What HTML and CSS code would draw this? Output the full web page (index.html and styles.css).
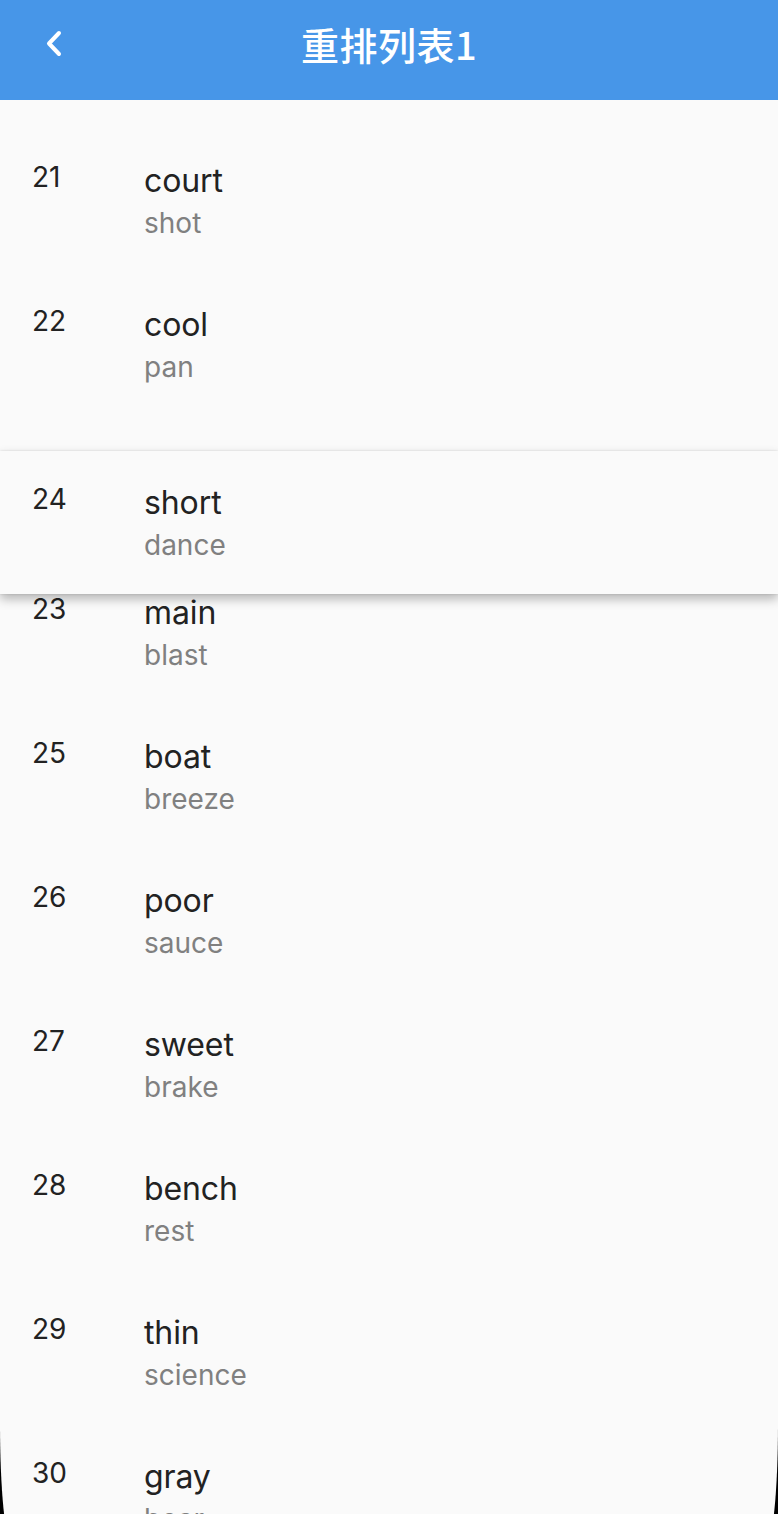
FILE: index.html
```html
<!DOCTYPE html>
<html lang="zh">
<head>
<meta charset="utf-8">
<title>重排列表1</title>
<link rel="stylesheet" href="styles.css">
</head>
<body>
<div class="screen">
  <header class="appbar">
    <div class="appbar-lead">
      <svg class="back" width="20" height="28" viewBox="0 0 20 28" aria-hidden="true">
        <polyline points="14,3 4,13.5 14,24" fill="none" stroke="#fff" stroke-width="4" stroke-linecap="round" stroke-linejoin="round"/>
      </svg>
    </div>
    <h1 class="appbar-title">重排列表1</h1>
    <div class="appbar-trail"></div>
  </header>

  <main class="list">
    <div class="row"><div class="tile"><span class="num">21</span><div class="texts"><div class="title">court</div><div class="sub">shot</div></div></div></div>
    <div class="row"><div class="tile"><span class="num">22</span><div class="texts"><div class="title">cool</div><div class="sub">pan</div></div></div></div>
    <div class="row row-gap"></div>
    <div class="row"><div class="tile"><span class="num">23</span><div class="texts"><div class="title">main</div><div class="sub">blast</div></div></div></div>
    <div class="row"><div class="tile"><span class="num">25</span><div class="texts"><div class="title">boat</div><div class="sub">breeze</div></div></div></div>
    <div class="row"><div class="tile"><span class="num">26</span><div class="texts"><div class="title">poor</div><div class="sub">sauce</div></div></div></div>
    <div class="row"><div class="tile"><span class="num">27</span><div class="texts"><div class="title">sweet</div><div class="sub">brake</div></div></div></div>
    <div class="row"><div class="tile"><span class="num">28</span><div class="texts"><div class="title">bench</div><div class="sub">rest</div></div></div></div>
    <div class="row"><div class="tile"><span class="num">29</span><div class="texts"><div class="title">thin</div><div class="sub">science</div></div></div></div>
    <div class="row"><div class="tile"><span class="num">30</span><div class="texts"><div class="title">gray</div><div class="sub">bear</div></div></div></div>
  </main>

  <div class="row dragging"><div class="tile"><span class="num">24</span><div class="texts"><div class="title">short</div><div class="sub">dance</div></div></div></div>

  <div class="bezel" aria-hidden="true"></div>
</div>
</body>
</html>
```

FILE: styles.css
```css
* { box-sizing: border-box; }

html, body {
  margin: 0;
  padding: 0;
  background: #fafafa;
}

body {
  font-family: Inter, Roboto, "Noto Sans CJK SC", sans-serif;
  color: #222222;
  overflow: hidden;
}

.screen {
  position: relative;
  width: 778px;
  height: 1514px;
  overflow: hidden;
  background: #fafafa;
}

.appbar {
  height: 100px;
  background: #4796e8;
  display: grid;
  grid-template-columns: 1fr auto 1fr;
  align-items: center;
  padding-bottom: 12px;
}

.appbar-lead {
  display: flex;
  align-items: center;
  padding-left: 45px;
}

.back { display: block; }

.appbar-title {
  margin: 0;
  font-family: "Noto Sans CJK SC", sans-serif;
  font-size: 38px;
  font-weight: 500;
  line-height: 44px;
  color: #ffffff;
  letter-spacing: 0.5px;
}

.list {
  padding-top: 29px;
}

.row {
  height: 144px;
  display: flex;
  align-items: center;
  padding-left: 32px;
  background: #fafafa;
}

.tile {
  display: flex;
  align-items: flex-start;
}

.num {
  width: 112px;
  font-size: 28px;
  line-height: 37px;
  color: #222222;
}

.texts {
  display: flex;
  flex-direction: column;
}

.title {
  font-size: 32px;
  line-height: 44px;
  color: #222222;
  letter-spacing: -0.1px;
}

.sub {
  font-size: 28px;
  line-height: 40px;
  color: #808080;
}

.dragging {
  position: absolute;
  left: 0;
  right: 0;
  top: 451px;
  height: 143px;
  box-shadow: 0 0 2px rgba(0, 0, 0, 0.12), 0 5px 10px rgba(0, 0, 0, 0.28);
}

.bezel {
  position: absolute;
  left: 0;
  right: 0;
  top: 0;
  bottom: -30px;
  border-bottom-left-radius: 12px 120px;
  border-bottom-right-radius: 12px 120px;
  box-shadow: 0 0 0 60px #000;
  pointer-events: none;
}
```
